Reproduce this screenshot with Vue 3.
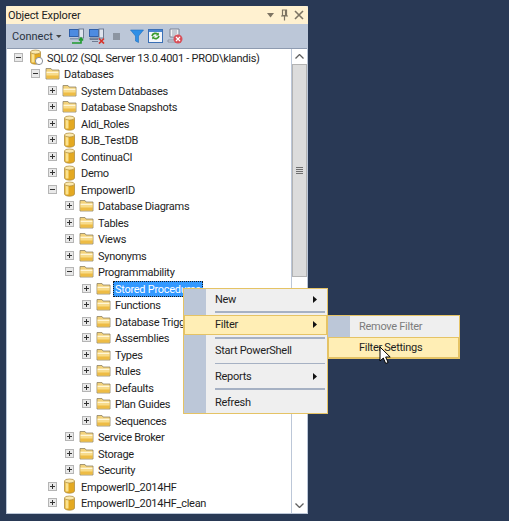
<script setup>
const rows = [
  { label: 'SQL02 (SQL Server 13.0.4001 - PROD\\klandis)', level: 0, open: true, icon: 'server' },
  { label: 'Databases', level: 1, open: true, icon: 'folder' },
  { label: 'System Databases', level: 2, icon: 'folder' },
  { label: 'Database Snapshots', level: 2, icon: 'folder' },
  { label: 'Aldi_Roles', level: 2, icon: 'db' },
  { label: 'BJB_TestDB', level: 2, icon: 'db' },
  { label: 'ContinuaCI', level: 2, icon: 'db' },
  { label: 'Demo', level: 2, icon: 'db' },
  { label: 'EmpowerID', level: 2, open: true, icon: 'db' },
  { label: 'Database Diagrams', level: 3, icon: 'folder' },
  { label: 'Tables', level: 3, icon: 'folder' },
  { label: 'Views', level: 3, icon: 'folder' },
  { label: 'Synonyms', level: 3, icon: 'folder' },
  { label: 'Programmability', level: 3, open: true, icon: 'folder' },
  { label: 'Stored Procedures', level: 4, icon: 'folder', selected: true },
  { label: 'Functions', level: 4, icon: 'folder' },
  { label: 'Database Triggers', level: 4, icon: 'folder' },
  { label: 'Assemblies', level: 4, icon: 'folder' },
  { label: 'Types', level: 4, icon: 'folder' },
  { label: 'Rules', level: 4, icon: 'folder' },
  { label: 'Defaults', level: 4, icon: 'folder' },
  { label: 'Plan Guides', level: 4, icon: 'folder' },
  { label: 'Sequences', level: 4, icon: 'folder' },
  { label: 'Service Broker', level: 3, icon: 'folder' },
  { label: 'Storage', level: 3, icon: 'folder' },
  { label: 'Security', level: 3, icon: 'folder' },
  { label: 'EmpowerID_2014HF', level: 2, icon: 'db' },
  { label: 'EmpowerID_2014HF_clean', level: 2, icon: 'db' },
]

const menu = [
  { label: 'New', arrow: true },
  { sep: true },
  { label: 'Filter', arrow: true, active: true },
  { sep: true },
  { label: 'Start PowerShell' },
  { sep: true },
  { label: 'Reports', arrow: true },
  { sep: true },
  { label: 'Refresh' },
]
</script>

<template>
  <div class="page">
    <div class="panel">
      <div class="title">
        <span class="title-text">Object Explorer</span>
        <div class="title-btns">
          <svg width="8" height="5" viewBox="0 0 8 5"><path d="M0 0h7L3.5 4.5z" fill="#7d7463" /></svg>
          <svg width="9" height="12" viewBox="0 0 9 12"><path d="M2.5 1h4v5.5h-4zM1 7h7M4.5 7v4.5M5.5 1.5v5" fill="none" stroke="#7d7463" stroke-width="1.2" /></svg>
          <svg width="10" height="10" viewBox="0 0 10 10"><path d="M1 1l8 8M9 1l-8 8" stroke="#7d7463" stroke-width="1.6" /></svg>
        </div>
      </div>

      <div class="toolbar">
        <span class="connect">Connect</span>
        <svg class="caret" width="6" height="3" viewBox="0 0 6 3"><path d="M0 0h5.5L2.8 3z" fill="#444" /></svg>
        <svg class="tb tb-first" width="16" height="16" viewBox="0 0 16 16">
          <rect x="0.5" y="1.5" width="9" height="7" fill="#4d8be0" stroke="#2f5fa8" />
          <rect x="10" y="1" width="4.5" height="9" fill="#dfe4ee" stroke="#6f7c92" />
          <path d="M1 10h9v1.5H1z" fill="#8796ad" />
          <path d="M3 15h9V11M10 12.5l2-2.5 2 2.5" fill="none" stroke="#1f9a2f" stroke-width="1.6" />
        </svg>
        <svg class="tb" width="16" height="16" viewBox="0 0 16 16">
          <rect x="0.5" y="1.5" width="9" height="7" fill="#4d8be0" stroke="#2f5fa8" />
          <rect x="10" y="1" width="4.5" height="9" fill="#dfe4ee" stroke="#6f7c92" />
          <path d="M1 10h8v1.5H1zM3 13.5h6" stroke="#6f7c92" fill="#8796ad" />
          <path d="M10 10.5l5 5M15 10.5l-5 5" stroke="#d6332a" stroke-width="1.7" />
        </svg>
        <span class="stop"></span>
        <svg class="tb" width="14" height="14" viewBox="0 0 14 14"><path d="M0.5 1h13L8.5 7v6.5l-3-1.5V7z" fill="#2f8fe6" stroke="#1f6ec0" stroke-width="0.6" /></svg>
        <svg class="tb" width="15" height="14" viewBox="0 0 15 14">
          <rect x="0.5" y="0.5" width="14" height="13" fill="#f3f6fb" stroke="#3a6fb5" />
          <rect x="1" y="1" width="13" height="2" fill="#4a86cf" />
          <path d="M4 7a3.5 3.5 0 0 1 6-1.5M11 7a3.5 3.5 0 0 1-6 1.5" fill="none" stroke="#3b9a2c" stroke-width="1.7" />
          <path d="M10.8 3.4v3h-3zM4.2 10.6v-3h3z" fill="#3b9a2c" />
        </svg>
        <svg class="tb" width="16" height="16" viewBox="0 0 16 16">
          <path d="M3 1h9v8H3z" fill="#eef0f4" stroke="#7a8294" />
          <path d="M5 3h5M5 5h5M5 7h4" stroke="#9aa2b2" />
          <path d="M1 12h8v2H1z" fill="#cdd2dc" stroke="#7a8294" stroke-width="0.7" />
          <circle cx="11" cy="11" r="4.5" fill="#d8505a" />
          <path d="M9 9l4 4M13 9l-4 4" stroke="#fff" stroke-width="1.2" />
        </svg>
      </div>

      <div class="body">
        <div class="tree">
          <div v-for="row in rows" :key="row.label" class="row" :class="'lvl' + row.level">
            <span class="expander">
              <svg width="9" height="9" viewBox="0 0 9 9">
                <path d="M2 4.5h5" stroke="#333" />
                <path v-if="!row.open" d="M4.5 2v5" stroke="#333" />
              </svg>
            </span>
            <svg v-if="row.icon === 'folder'" class="icon" width="15" height="13" viewBox="0 0 15 13">
              <path d="M1 3V1.500h5L7 3h7v9H1z" fill="#f3d27a" stroke="#8f8364" stroke-width="0.8" />
              <path d="M1.500 4.500h12v7h-12z" fill="#eebc45" />
              <path d="M1.500 4.500h12v2h-12z" fill="#fff6d6" />
              <path d="M1.500 6.500h12v2h-12z" fill="#f8dc8a" />
            </svg>
            <svg v-else class="icon" width="15" height="16" viewBox="0 0 15 16">
              <path d="M2.5 3v10c0 1.2 2.2 2.2 5 2.2s5-1 5-2.200V3z" fill="#e4a921" stroke="#a9863a" stroke-width="0.7" />
              <path d="M3.500 4v9.500h3V4z" fill="#fbe28e" />
              <ellipse cx="7.500" cy="3" rx="5" ry="2" fill="#fbe9ae" stroke="#a9863a" stroke-width="0.7" />
              <template v-if="row.icon === 'server'">
                <circle cx="11" cy="12" r="3.600" fill="#fff" stroke="#8a8f98" />
              </template>
            </svg>
            <span class="label" :class="{ selected: row.selected }">{{ row.label }}</span>
          </div>
        </div>

        <div class="scrollbar">
          <div class="sb-btn">
            <svg width="9" height="5" viewBox="0 0 9 5"><path d="M0.500 4.500l4-4 4 4" fill="none" stroke="#606060" stroke-width="1.300" /></svg>
          </div>
          <div class="sb-thumb">
            <span></span><span></span><span></span><span></span>
          </div>
          <div class="sb-track"></div>
          <div class="sb-btn">
            <svg width="9" height="5" viewBox="0 0 9 5"><path d="M0.500 0.500l4 4 4-4" fill="none" stroke="#606060" stroke-width="1.300" /></svg>
          </div>
        </div>
      </div>
    </div>

    <div class="menu main-menu">
      <template v-for="(item, i) in menu" :key="i">
        <div v-if="item.sep" class="sep"></div>
        <div v-else class="item" :class="{ active: item.active }">
          <span class="gutter"></span>
          <span class="item-label">{{ item.label }}</span>
          <svg v-if="item.arrow" class="arrow" width="4" height="7" viewBox="0 0 4 7"><path d="M0 0l4 3.500L0 7z" fill="#111" /></svg>
        </div>
      </template>
    </div>

    <div class="menu sub-menu">
      <div class="item disabled">
        <span class="gutter"></span>
        <span class="item-label">Remove Filter</span>
      </div>
      <div class="item active">
        <span class="gutter"></span>
        <span class="item-label">Filter Settings</span>
      </div>
    </div>

    <svg class="cursor" width="13" height="19" viewBox="0 0 13 19">
      <path d="M1 1v14l3.300-3 2.400 5.500 2.400-1-2.400-5.500h4.500z" fill="#fff" stroke="#000" stroke-width="1" />
    </svg>
  </div>
</template>

<style scoped>
.page {
  position: relative;
  width: 509px;
  height: 521px;
  box-sizing: border-box;
  padding: 6px 201px 7px 6px;
  background: #293955;
  font-family: "Roboto", "Noto Sans", sans-serif;
  font-size: 11px;
  letter-spacing: -0.28px;
  color: #1e1e1e;
  overflow: hidden;
}
.panel {
  height: 100%;
  display: flex;
  flex-direction: column;
  background: #bcc7d8;
}
.title {
  height: 18px;
  flex: none;
  display: flex;
  align-items: center;
  justify-content: space-between;
  padding: 0 4px 0 2px;
  background: #fff1d0;
  border-radius: 2px 2px 0 0;
}
.title-text {
  color: #222;
  letter-spacing: -0.12px;
}
.title-btns {
  display: flex;
  align-items: center;
  gap: 5px;
}
.toolbar {
  height: 24px;
  flex: none;
  display: flex;
  align-items: center;
  padding-left: 6px;
  background: #bcc7d8;
}
.connect {
  color: #2a3342;
  letter-spacing: 0;
}
.caret {
  margin-left: 3px;
}
.tb {
  margin-left: 4px;
}
.tb-first {
  margin-left: 7px;
}
.stop {
  width: 7px;
  height: 7px;
  margin: 0 6px 0 8px;
  background: #8c95a2;
}
.body {
  flex: 1;
  min-height: 0;
  display: flex;
  margin: 0 1px 1px;
  border-top: 1px solid #8e9bb0;
}
.tree {
  flex: 1;
  background: #fff;
  overflow: hidden;
}
.row {
  height: 16.5px;
  display: flex;
  align-items: center;
  white-space: nowrap;
}
.lvl0 { padding-left: 7px; }
.lvl1 { padding-left: 24px; }
.lvl2 { padding-left: 41px; }
.lvl3 { padding-left: 58px; }
.lvl4 { padding-left: 75px; }
.expander {
  width: 9px;
  height: 9px;
  flex: none;
  display: flex;
  background: #e9e9e9;
  box-shadow: inset 0 0 0 1px #b5b5b5;
}
.icon {
  flex: none;
  margin-left: 5px;
}
.label {
  margin: 1px 0 0 2px;
  padding: 1px 2px 0;
  line-height: 15px;
}
.label.selected {
  color: #fff;
  background: #3399ff;
  outline: 1px dotted #1a1a1a;
  outline-offset: -1px;
}
.scrollbar {
  width: 15px;
  flex: none;
  display: flex;
  flex-direction: column;
  background: #fff;
  border-left: 1px solid #bcc7d8;
}
.sb-btn {
  height: 15px;
  flex: none;
  display: flex;
  align-items: center;
  justify-content: center;
}
.sb-thumb {
  height: 213px;
  flex: none;
  display: flex;
  flex-direction: column;
  align-items: center;
  justify-content: center;
  gap: 1px;
  background: #dcdcdc;
  border: 1px solid #b3b3b3;
  box-sizing: border-box;
}
.sb-thumb span {
  width: 7px;
  height: 1px;
  background: #6e6e6e;
}
.sb-track {
  flex: 1;
}
.menu {
  position: absolute;
  box-sizing: border-box;
  background: #efefef;
  border: 1px solid #e5c365;
  background-image: linear-gradient(#bcc7d8, #bcc7d8);
  background-repeat: no-repeat;
  background-size: 22px 100%;
}
.main-menu {
  left: 183px;
  top: 288px;
  width: 145px;
  height: 126px;
  padding: 0 1px;
}
.sub-menu {
  left: 327px;
  top: 315px;
  width: 133px;
  height: 44px;
  padding: 0 1px;
}
.item {
  position: relative;
  display: flex;
  align-items: center;
  height: 21px;
  box-sizing: border-box;
  color: #1e1e1e;
}
.main-menu .item {
  height: 20.5px;
}
.gutter {
  width: 22px;
  flex: none;
}
.item-label {
  margin-left: 8px;
}
.item.active {
  background: #ffeeb5;
  border: 1px solid #e5c365;
  margin: 0 -1px;
}
.item.disabled {
  color: #7c7c7c;
}
.arrow {
  position: absolute;
  right: 9px;
}
.sep {
  height: 1.5px;
  margin: 1.85px 1px 1.85px 30px;
  background: #a6b1c3;
}
.cursor {
  position: absolute;
  left: 379px;
  top: 346px;
}
</style>
